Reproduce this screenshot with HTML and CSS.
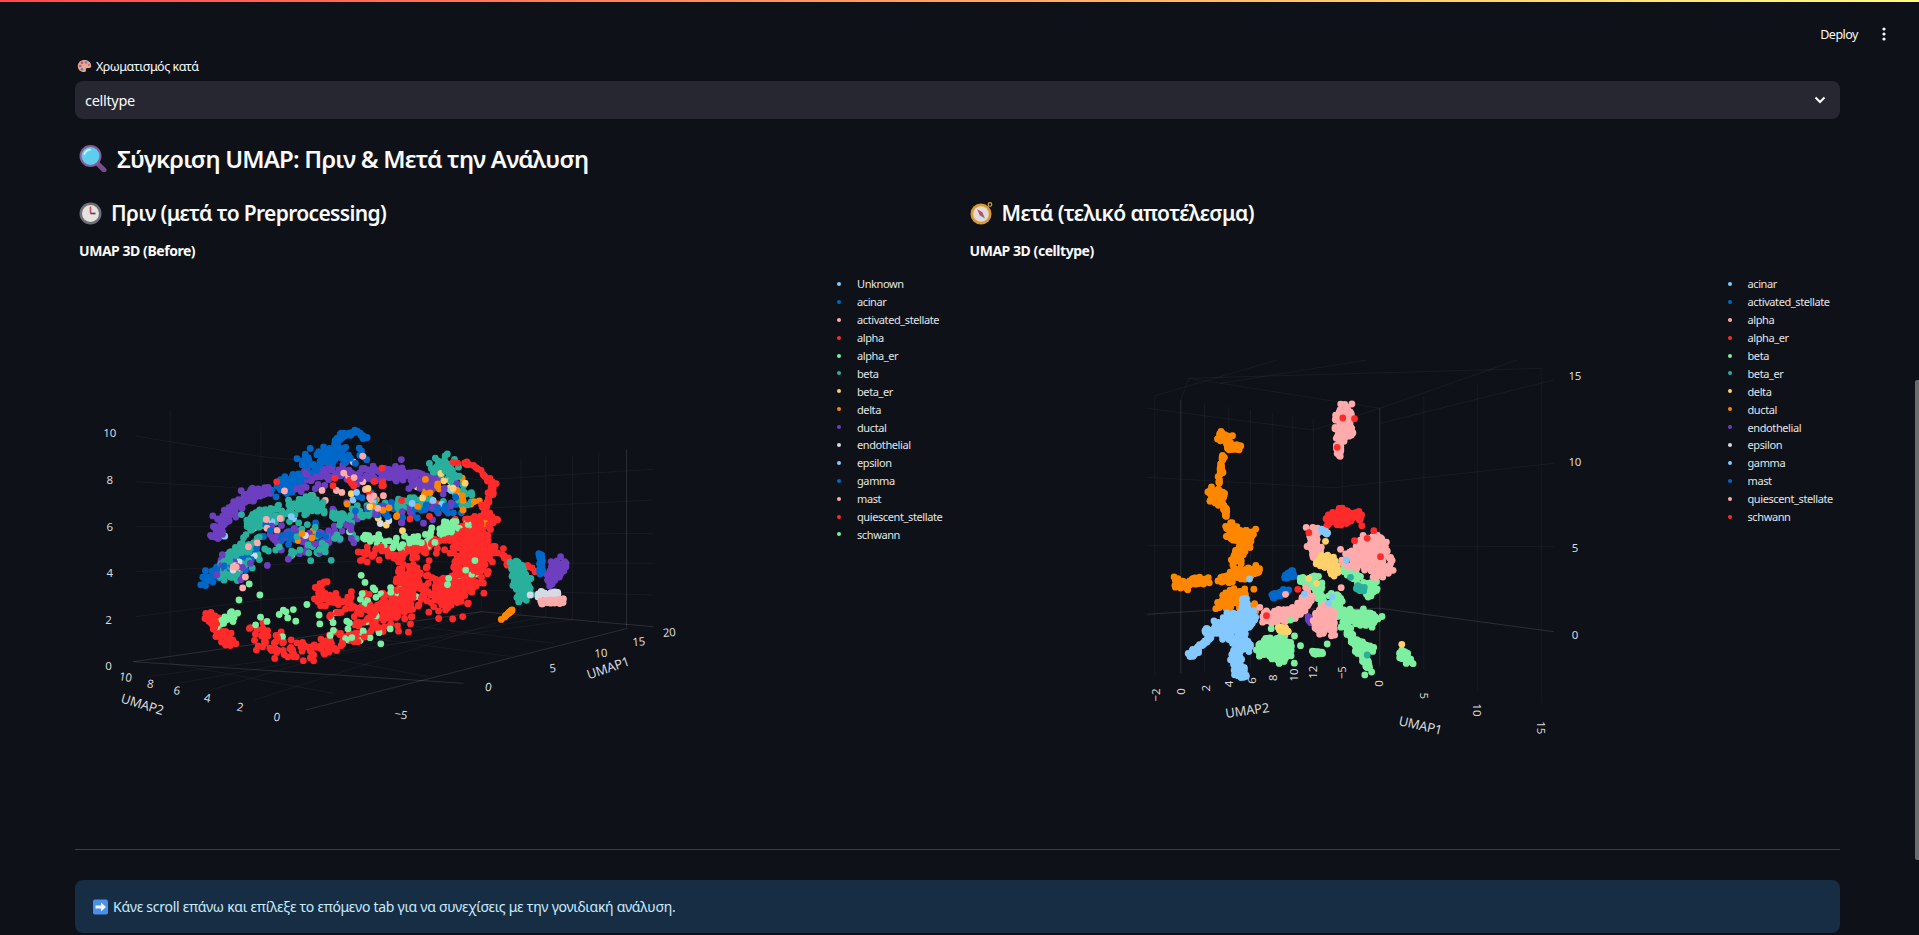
FILE: index.html
```html
<!doctype html>
<html>
<head>
<meta charset="utf-8">
<title>UMAP</title>
<link rel="stylesheet" href="styles.css">
<script src="plots.js"></script>
</head>

<body>
<div class="topbar"></div>

<div class="toolbar">
	<span class="deploy">Deploy</span>
	<svg class="dots" width="4" height="14" viewBox="0 0 4 14"><circle cx="2" cy="2" r="1.6"/><circle cx="2" cy="7" r="1.6"/><circle cx="2" cy="12" r="1.6"/></svg>
</div>

<div class="main">
	<div class="field-label">
		<svg class="emoji" width="15" height="14" viewBox="0 0 15 14"><path d="M7.5 1C3.5 1 .8 3.7.8 7.200c0 3.300 2.700 5.800 6.200 5.800 1.700 0 2.300-.9 1.900-2-.4-1.200.3-2.100 1.600-2.100h2c1 0 1.700-.7 1.700-2C14.200 3.600 11.400 1 7.500 1z" fill="#e8a987"/><circle cx="5" cy="3.800" r="1.300" fill="#e0405a"/><circle cx="9" cy="3.400" r="1.300" fill="#4a8fe0"/><circle cx="3.200" cy="7" r="1.300" fill="#8a5fd0"/><circle cx="12" cy="5.800" r="1.100" fill="#e05aa0"/><circle cx="5" cy="10.200" r="1.200" fill="#3f7fd0"/></svg>
		Χρωματισμός κατά
	</div>
	<div class="select">
		<span>celltype</span>
		<svg width="12" height="8" viewBox="0 0 12 8"><path d="M1.500 1.500L6 6l4.500-4.500" fill="none" stroke="#fafafa" stroke-width="2"/></svg>
	</div>

	<h2 class="title">
		<svg class="emoji" width="28" height="27" viewBox="0 0 28 27"><path d="M18 18l7 7" stroke="#7a4a8c" stroke-width="5" stroke-linecap="round"/><circle cx="11.500" cy="11" r="10" fill="#5fcdee" stroke="#8a5a9a" stroke-width="2"/><path d="M5.500 9c.8-2.600 3-4 5.500-4.200" fill="none" stroke="#c8f2fb" stroke-width="2" stroke-linecap="round"/></svg>
		Σύγκριση UMAP: Πριν &amp; Μετά την Ανάλυση
	</h2>

	<div class="columns">
		<div class="column">
			<h3 class="subtitle">
				<svg class="emoji" width="23" height="23" viewBox="0 0 23 23"><circle cx="11.500" cy="11.500" r="11" fill="#6d6f78"/><circle cx="11.500" cy="11.500" r="8.500" fill="#e6e2de"/><path d="M11.500 11.500V4.500" stroke="#d0486a" stroke-width="1.600"/><path d="M11.500 11.500h5" stroke="#45475a" stroke-width="1.600"/></svg>
				Πριν (μετά το Preprocessing)
			</h3>
			<div class="plot-title">UMAP 3D (Before)</div>
			<div class="plot">
				<svg id="before" class="chart" width="755" height="570" viewBox="75 270 755 570"></svg>
				<ul class="legend" id="legend1"></ul>
			</div>
		</div>
		<div class="column">
			<h3 class="subtitle">
				<svg class="emoji" width="23" height="23" viewBox="0 0 23 23"><circle cx="11" cy="12" r="10.500" fill="#d99a35"/><circle cx="11" cy="12" r="7.800" fill="#e2dcd8"/><circle cx="20" cy="2.500" r="1.800" fill="none" stroke="#d99a35" stroke-width="1.200"/><path d="M7.500 7.500l5 3 2.500 6-5-3z" fill="#77737a"/><path d="M7.500 7.500l5 3-2.500 3z" fill="#d8406a"/></svg>
				Μετά (τελικό αποτέλεσμα)
			</h3>
			<div class="plot-title">UMAP 3D (celltype)</div>
			<div class="plot">
				<svg id="after" class="chart" width="755" height="570" viewBox="965.500 270 755 570"></svg>
				<ul class="legend" id="legend2"></ul>
			</div>
		</div>
	</div>

	<hr class="rule">

	<div class="info">
		<svg class="emoji" width="15" height="16" viewBox="0 0 15 16"><rect x="0" y=".5" width="15" height="15" rx="2" fill="#4a8fe8"/><path d="M2.500 6.500h5.500V3.500l5 4.500-5 4.500v-3H2.500z" fill="#f4f6fa"/></svg>
		Κάνε scroll επάνω και επίλεξε το επόμενο tab για να συνεχίσεις με την γονιδιακή ανάλυση.
	</div>
</div>

<div class="scrollbar"></div>
</body>
</html>
```

FILE: styles.css
```css
html, body { margin:0; padding:0; height:100%; overflow:hidden;}
body { background:#0e1117; color:#fafafa; font-family:"Noto Sans","Open Sans",sans-serif;}
h2, h3, ul { margin:0; padding:0;}
li { list-style:none;}

.topbar { height:2px; background:linear-gradient(90deg,#ff4b4b,#fffd80);}

.toolbar { display:flex; justify-content:flex-end; align-items:center; gap:24px; box-sizing:border-box; height:54px; padding:10px 33px 0 0; font-size:12.500px; letter-spacing:-.5px;}
.dots { fill:#fafafa;}

.main { padding:0 79px 0 75px;}

.emoji { flex:none;}

.field-label { display:flex; align-items:center; gap:4px; height:20px; padding-left:2px; font-size:12.500px; letter-spacing:-.5px;}
.select { display:flex; justify-content:space-between; align-items:center; height:38px; margin-top:5px; padding:0 14px 0 10px; background:#262730; border-radius:8px; font-size:14.500px; letter-spacing:-.3px;}

.title { display:flex; align-items:center; gap:10px; height:40px; margin-top:19px; padding-left:4px; font-size:24px; font-weight:600; letter-spacing:-.8px;}

.columns { display:flex; gap:16px; margin-top:21px;}
.column { flex:1; min-width:0;}

.subtitle { display:flex; align-items:center; gap:9px; height:28px; padding-left:4px; font-size:21px; font-weight:600; letter-spacing:-.65px;}
.plot-title { height:20px; margin-top:14px; padding-left:4px; font-size:14px; font-weight:700; line-height:20px; letter-spacing:-.45px;}

.plot { display:flex; height:570px; margin-top:9px;}
.chart { flex:none; font-family:"Noto Sans","Open Sans",sans-serif;}
.chart text { fill:#d8d9dc; font-size:11.500px; letter-spacing:-.2px; text-anchor:middle; dominant-baseline:central;}
.chart .axis { font-size:13px;}
.grid { stroke:#fafafa; stroke-opacity:.045; stroke-width:1; fill:none;}
.edge { stroke:#fafafa; stroke-opacity:.12; stroke-width:1; fill:none;}

.legend { padding-top:5px; font-size:11px; letter-spacing:-.4px; color:#e4e5e7;}
.legend li { display:flex; align-items:center; gap:16px; height:17.900px; padding-left:7px; white-space:nowrap;}
.legend i { width:4px; height:4px; border-radius:50%;}

.rule { height:1px; margin:9px 0 30px; border:none; background:#3d3f46;}

.info { display:flex; align-items:center; gap:5px; height:53px; padding-left:18px; background:#172d43; border-radius:8px; color:#c7ebff; font-size:14px; letter-spacing:-.28px;}

.scrollbar { position:absolute; right:0; top:380px; height:480px; width:4px; background:#6b6c70; border-radius:2px 0 0 2px;}
```

FILE: plots.js
```js
window.onload = function (){
	var NS = 'http://www.w3.org/2000/svg';
	var colors = ['#83c9ff','#0068c9','#ffabab','#ff2b2b','#7defa1','#29b09d','#ffd16a','#ff8700','#6d3fc0','#d5dae5'];
	var BLUE=0, NAVY=1, PINK=2, RED=3, GREEN=4, TEAL=5, YEL=6, ORA=7, PUR=8, GREY=9;

	//same dots on every load
	var seed = 20240;
	function rnd(){
		seed = (seed * 16807) % 2147483647;
		return seed / 2147483647;
	}
	function gauss(){
		return (rnd() + rnd() + rnd() - 1.5) / 0.75;
	}

	function add(oSvg, name, attrs, text){
		var oEl = document.createElementNS(NS, name);
		for(var k in attrs){
			oEl.setAttribute(k, attrs[k]);
		}
		if(text) oEl.textContent = text;
		oSvg.appendChild(oEl);
		return oEl;
	}

	function fillLegend(id, names){
		var oUl = document.getElementById(id);
		for(var i=0;i<names.length;i++){
			var oLi = document.createElement('li');
			var oI = document.createElement('i');
			oI.style.background = colors[i % colors.length];
			oLi.appendChild(oI);
			oLi.appendChild(document.createTextNode(names[i]));
			oUl.appendChild(oLi);
		}
	}

	//a chart is written in the coordinates of its own zoom crop, px/py bring them to the page
	function drawChart(oSvg, px, py, dens, lines, edges, labels, clouds){
		var i, j;
		function pathOf(pts){
			var s = '';
			for(var n=0;n<pts.length;n++){
				s += (n ? 'L' : 'M') + px(pts[n][0]).toFixed(1) + ' ' + py(pts[n][1]).toFixed(1);
			}
			return s;
		}
		for(i=0;i<lines.length;i++) add(oSvg, 'path', {'class':'grid', d:pathOf(lines[i])});
		for(i=0;i<edges.length;i++) add(oSvg, 'path', {'class':'edge', d:pathOf(edges[i])});
		for(i=0;i<labels.length;i++){
			var l = labels[i];
			var x = px(l[1]), y = py(l[2]);
			add(oSvg, 'text', {x:x, y:y, 'class':l[4] ? 'axis' : '', transform:'rotate(' + (l[3] || 0) + ' ' + x + ' ' + y + ')'}, l[0]);
		}

		//points of one pass are mixed so that the colours overlap as in a depth sort
		var dots = [];
		for(i=0;i<clouds.length;i++){
			var c = clouds[i];
			//spots are single dots at their exact place
			if(c.spots){
				for(j=0;j<c.spots.length;j++){
					dots.push({x:c.spots[j][0], y:c.spots[j][1], color:c.c, z:c.z || 0});
				}
				continue;
			}
			var pts = c.path;
			var count = Math.round(c.n * dens);
			for(j=0;j<count;j++){
				var t = rnd() * (pts.length - 1);
				var a = Math.floor(t);
				var b = Math.min(a + 1, pts.length - 1);
				var f = t - a;
				dots.push({
					x: pts[a][0] + (pts[b][0] - pts[a][0]) * f + gauss() * c.sx,
					y: pts[a][1] + (pts[b][1] - pts[a][1]) * f + gauss() * c.sy,
					color: c.c,
					z: (c.z || 0) + rnd() * (c.mix || 0)
				});
			}
		}
		dots.sort(function (p, q){ return p.z - q.z; });
		for(i=0;i<dots.length;i++){
			add(oSvg, 'circle', {cx:px(dots[i].x).toFixed(1), cy:py(dots[i].y).toFixed(1), r:3.4, fill:colors[dots[i].color]});
		}
	}

	fillLegend('legend1', ['Unknown','acinar','activated_stellate','alpha','alpha_er','beta','beta_er','delta','ductal','endothelial','epsilon','gamma','mast','quiescent_stellate','schwann']);
	fillLegend('legend2', ['acinar','activated_stellate','alpha','alpha_er','beta','beta_er','delta','ductal','endothelial','epsilon','gamma','mast','quiescent_stellate','schwann']);

	drawChart(document.getElementById('before'),
		function (x){ return 80 + x / 2.529; },
		function (y){ return 400 + y / 3; },
		1.2,
		[
			[[140,108],[458,170],[787,205]],[[140,245],[458,268],[787,300]],[[140,380],[458,380],[787,385]],[[140,515],[458,495],[787,480]],[[140,650],[458,600],[787,575]],
			[[787,205],[1015,240],[1450,208]],[[787,300],[1015,325],[1450,300]],[[787,385],[1015,405],[1450,400]],[[787,480],[1015,490],[1450,490]],[[787,575],[1015,570],[1450,585]],
			[[228,30],[228,790]],[[458,75],[458,735]],[[640,110],[640,700]],[[787,140],[787,670]],[[1015,170],[1015,635]],[[1115,180],[1115,645]],[[1178,170],[1178,650]],[[1245,165],[1245,660]],[[1312,155],[1312,672]],
			[[228,790],[640,880]],[[458,735],[880,830]],[[640,700],[1090,770]],[[787,670],[1200,730]],
			[[330,870],[1015,635]],[[440,900],[1115,645]],[[250,850],[1178,650]],[[170,830],[1245,660]]
		],
		[
			[[135,785],[1015,635],[1450,680]],[[570,930],[1385,685]],[[135,785],[970,850]],[[1382,148],[1382,680]]
		],
		[
			['10',75,98],['8',75,238],['6',75,378],['4',75,517],['2',72,657],['0',72,797],
			['10',115,830,10],['8',178,850,10],['6',245,870,10],['4',322,893,10],['2',405,920,10],['0',498,950,10],
			['−5',812,942,10],['0',1033,860,10],['5',1195,803,-5],['10',1317,758,-5],['15',1413,724,-5],['20',1490,696,-5],
			['UMAP2',158,912,17,1],['UMAP1',1335,803,-19,1]
		],
		[
			{c:PUR, n:100, sx:14, sy:14, mix:30, path:[[340,410],[360,360],[420,290],[480,270]]},
			{c:PUR, n:160, sx:24, sy:24, mix:30, path:[[540,250],[620,215],[700,225],[780,215],[850,235],[900,255]]},
			{c:PUR, n:50, sx:30, sy:34, mix:60, path:[[330,500],[430,520],[620,410],[730,340],[900,340],[960,270]]},
			{c:PUR, n:26, sx:50, sy:20, mix:60, path:[[490,400],[640,420]]},
			{c:NAVY, n:30, sx:6, sy:6, mix:40, path:[[645,135],[665,105],[695,90],[725,115]]},
			{c:NAVY, n:80, sx:24, sy:22, mix:30, path:[[575,200],[620,165],[705,175]]},
			{c:NAVY, n:40, sx:22, sy:18, mix:30, path:[[510,270],[560,225]]},
			{c:NAVY, n:34, sx:14, sy:16, mix:50, path:[[310,545],[345,520],[420,480],[440,440]]},
			{c:NAVY, n:35, sx:26, sy:24, mix:70, path:[[700,290],[780,340],[960,320]]},
			{c:NAVY, n:20, sx:50, sy:20, mix:60, path:[[490,410],[600,400]]},
			{c:TEAL, n:110, sx:20, sy:20, mix:50, path:[[430,370],[480,345],[560,315],[600,305]]},
			{c:TEAL, n:70, sx:24, sy:14, mix:50, path:[[620,335],[680,355],[730,320],[820,310],[900,300]]},
			{c:TEAL, n:60, sx:14, sy:22, mix:50, path:[[885,195],[930,190],[945,250],[985,305]]},
			{c:TEAL, n:90, sx:26, sy:26, mix:50, path:[[375,530],[400,470],[440,430]]},
			{c:TEAL, n:30, sx:50, sy:24, mix:70, path:[[510,380],[580,460],[680,395]]},
			{c:ORA, n:28, sx:32, sy:24, mix:80, path:[[540,430],[615,375],[730,305],[800,350],[905,255],[960,280],[1010,350]]},
			{c:YEL, n:14, sx:26, sy:22, mix:80, path:[[700,250],[790,420],[920,210],[960,300]]},
			{c:PINK, n:24, sx:26, sy:16, mix:80, path:[[360,575],[430,460],[540,285],[650,280],[700,180],[760,365]]},
			{c:BLUE, n:10, sx:26, sy:18, mix:80, path:[[360,420],[650,290],[880,320],[940,280]]},
			{c:GREY, n:8, sx:18, sy:18, mix:80, path:[[335,545],[430,465],[710,370],[880,320]]},
			{c:RED, n:32, sx:8, sy:6, z:40, mix:20, path:[[950,185],[1005,200],[1040,245],[1040,290],[1020,320]]},
			{c:RED, n:14, sx:24, sy:26, z:40, mix:40, path:[[490,245],[680,280],[760,220],[830,350],[930,325]]},
			{c:RED, n:120, sx:18, sy:16, z:30, mix:30, path:[[700,460],[800,470],[900,430],[1000,380],[1040,350]]},
			{c:RED, n:340, sx:36, sy:38, z:30, mix:30, path:[[980,390],[1000,470],[960,560],[900,600]]},
			{c:RED, n:170, sx:36, sy:42, z:30, mix:30, path:[[850,510],[830,590],[770,650]]},
			{c:RED, n:60, sx:30, sy:34, z:30, mix:30, path:[[660,610],[730,640],[790,640]]},
			{c:RED, n:50, sx:13, sy:13, z:30, mix:30, path:[[325,640],[350,700],[385,725]]},
			{c:RED, n:110, sx:34, sy:26, z:30, mix:30, path:[[450,695],[510,735],[585,760],[650,725],[720,690]]},
			{c:RED, n:26, sx:14, sy:16, z:30, mix:30, path:[[610,530],[605,600],[650,590]]},
			{c:RED, n:18, sx:9, sy:9, z:60, mix:10, path:[[1050,440],[1085,490],[1150,505]]},
			{c:GREEN, n:60, sx:28, sy:13, z:35, mix:30, path:[[710,410],[780,425],[880,430],[920,375],[980,380]]},
			{c:GREEN, n:16, sx:12, sy:11, z:35, mix:30, path:[[345,680],[390,640]]},
			{c:GREEN, n:50, sx:30, sy:30, z:35, mix:30, path:[[440,670],[570,645],[660,700],[750,700],[730,530],[870,590],[1005,480]]},
			{c:GREEN, spots:[[455,585],[428,552],[402,600],[512,710]], z:50},
			{c:TEAL, n:100, sx:15, sy:15, z:70, path:[[1100,490],[1120,540],[1120,590]]},
			{c:PUR, n:50, sx:16, sy:15, z:65, path:[[1190,535],[1220,485]]},
			{c:NAVY, n:22, sx:4, sy:7, z:72, path:[[1165,460],[1165,520]]},
			{c:GREY, n:16, sx:12, sy:6, z:74, path:[[1150,585],[1210,580]]},
			{c:PINK, n:30, sx:9, sy:6, z:76, path:[[1170,605],[1228,603]]},
			{c:ORA, n:12, sx:1, sy:1, z:75, path:[[1065,660],[1100,622]]}
		]
	);

	drawChart(document.getElementById('after'),
		function (x){ return 1100 + x / 3; },
		function (y){ return 360 + y / 3; },
		1.5,
		[
			[[140,145],[640,210],[838,145]],[[140,352],[700,383],[1360,310]],[[140,557],[700,557],[1360,560]],
			[[163,110],[163,950]],[[312,130],[312,935]],[[385,140],[385,930]],[[450,150],[450,925]],[[517,160],[517,920]],[[577,170],[577,920]],[[638,175],[638,920]],[[725,190],[725,920]],
			[[970,110],[970,930]],[[1130,70],[1130,990]],[[1322,25],[1322,1030]],
			[[160,108],[530,0]],[[838,145],[1250,0]],[[360,70],[800,0]],[[840,190],[1360,60]],
			[[241,120],[265,55],[838,145]],[[265,55],[1322,25]]
		],
		[
			[[241,120],[241,940]],[[838,145],[838,920]],[[140,763],[340,750],[840,745],[1360,815]]
		],
		[
			['15',1423,45],['10',1423,303],['5',1423,563],['0',1423,822],
			['−2',165,1005,-90],['0',240,995,-90],['2',315,985,-90],['4',385,972,-90],['6',452,962,-90],['8',517,953,-90],['10',578,945,-90],['12',637,937,-90],['−5',722,938,-90],
			['0',838,970,90],['5',972,1007,90],['10',1130,1050,90],['15',1322,1103,90],
			['UMAP2',440,1050,-8,1],['UMAP1',960,1095,13,1]
		],
		[
			{c:ORA, n:40, sx:11, sy:10, path:[[352,235],[375,225],[385,258],[415,268]]},
			{c:ORA, n:18, sx:4, sy:9, path:[[368,280],[362,330],[358,365]]},
			{c:ORA, n:70, sx:15, sy:15, path:[[340,405],[355,415]]},
			{c:ORA, n:14, sx:4, sy:10, path:[[370,440],[380,465]]},
			{c:ORA, n:90, sx:13, sy:13, path:[[392,495],[400,530],[450,520],[420,570],[410,610]]},
			{c:ORA, n:60, sx:16, sy:12, path:[[370,660],[420,640],[480,630]]},
			{c:ORA, n:50, sx:10, sy:9, path:[[222,652],[250,680],[285,660],[320,665]]},
			{c:ORA, n:80, sx:24, sy:14, path:[[370,735],[425,700]]},
			{c:ORA, n:12, sx:9, sy:11, path:[[455,745],[465,770]]},
			{c:PINK, n:90, sx:18, sy:20, path:[[730,155],[735,195],[725,230]]},
			{c:PINK, n:14, sx:7, sy:9, path:[[715,250],[715,285]]},
			{c:RED, spots:[[727,174],[762,176],[710,262]], z:3},
			{c:BLUE, n:130, sx:26, sy:24, path:[[345,810],[410,790],[440,780]]},
			{c:BLUE, n:30, sx:9, sy:9, path:[[270,890],[300,860],[340,820]]},
			{c:BLUE, n:30, sx:8, sy:12, path:[[432,720],[430,770]]},
			{c:BLUE, n:60, sx:12, sy:14, path:[[405,870],[410,930],[430,940]]},
			{c:BLUE, n:40, sx:20, sy:12, path:[[400,840],[450,860]]},
			{c:GREEN, n:150, sx:28, sy:24, path:[[510,860],[550,870]]},
			{c:GREEN, n:80, sx:11, sy:11, path:[[700,700],[720,770],[770,860],[810,930]]},
			{c:GREEN, n:60, sx:18, sy:15, path:[[760,765],[820,780]]},
			{c:GREEN, n:30, sx:12, sy:12, path:[[780,860],[800,870]]},
			{c:GREEN, n:40, sx:12, sy:14, path:[[610,665],[650,660],[660,720]]},
			{c:GREEN, n:40, sx:14, sy:14, path:[[730,620],[790,680],[820,695]]},
			{c:GREEN, n:10, sx:7, sy:4, path:[[635,875],[665,880]]},
			{c:GREEN, n:24, sx:10, sy:11, path:[[905,880],[925,905]]},
			{c:GREEN, spots:[[600,857],[680,852],[582,828],[705,750],[828,665]]},
			{c:TEAL, n:14, sx:9, sy:7, z:3, path:[[770,685],[785,690]]},
			{c:TEAL, spots:[[750,652],[800,885]], z:4},
			{c:PINK, n:130, sx:10, sy:14, z:1, path:[[495,775],[550,765],[600,750],[625,705]]},
			{c:PINK, n:130, sx:20, sy:26, z:2, path:[[670,770],[672,790]]},
			{c:PINK, n:60, sx:12, sy:16, z:1, path:[[635,510],[650,585]]},
			{c:PINK, n:240, sx:26, sy:24, z:1, path:[[765,600],[815,545],[835,625]]},
			{c:PUR, n:6, sx:4, sy:8, z:1.5, path:[[625,770],[628,785]]},
			{c:RED, n:70, sx:18, sy:14, z:3, path:[[690,480],[725,465],[770,470]]},
			{c:RED, spots:[[625,518],[800,535],[820,512],[840,590],[498,767],[784,497],[762,542]], z:3},
			{c:BLUE, n:10, sx:5, sy:4, z:3, path:[[658,508],[680,520]]},
			{c:YEL, n:50, sx:14, sy:14, z:2.5, path:[[655,610],[690,600],[700,640]]},
			{c:YEL, n:16, sx:7, sy:6, z:2.5, path:[[535,810],[560,812]]},
			{c:YEL, spots:[[675,544],[625,655],[648,670],[904,853]], z:3},
			{c:NAVY, n:36, sx:6, sy:7, z:3, path:[[560,650],[575,640]]},
			{c:NAVY, n:24, sx:8, sy:5, z:3, path:[[518,708],[560,692]]},
			{c:RED, spots:[[592,688]], z:4},
			{c:BLUE, spots:[[447,657],[612,702],[685,730],[738,600],[695,710]], z:4},
			{c:PINK, spots:[[555,703],[722,683],[478,742],[720,568]], z:4},
			{c:GREEN, spots:[[512,806],[570,780]], z:4}
		]
	);
};
```
